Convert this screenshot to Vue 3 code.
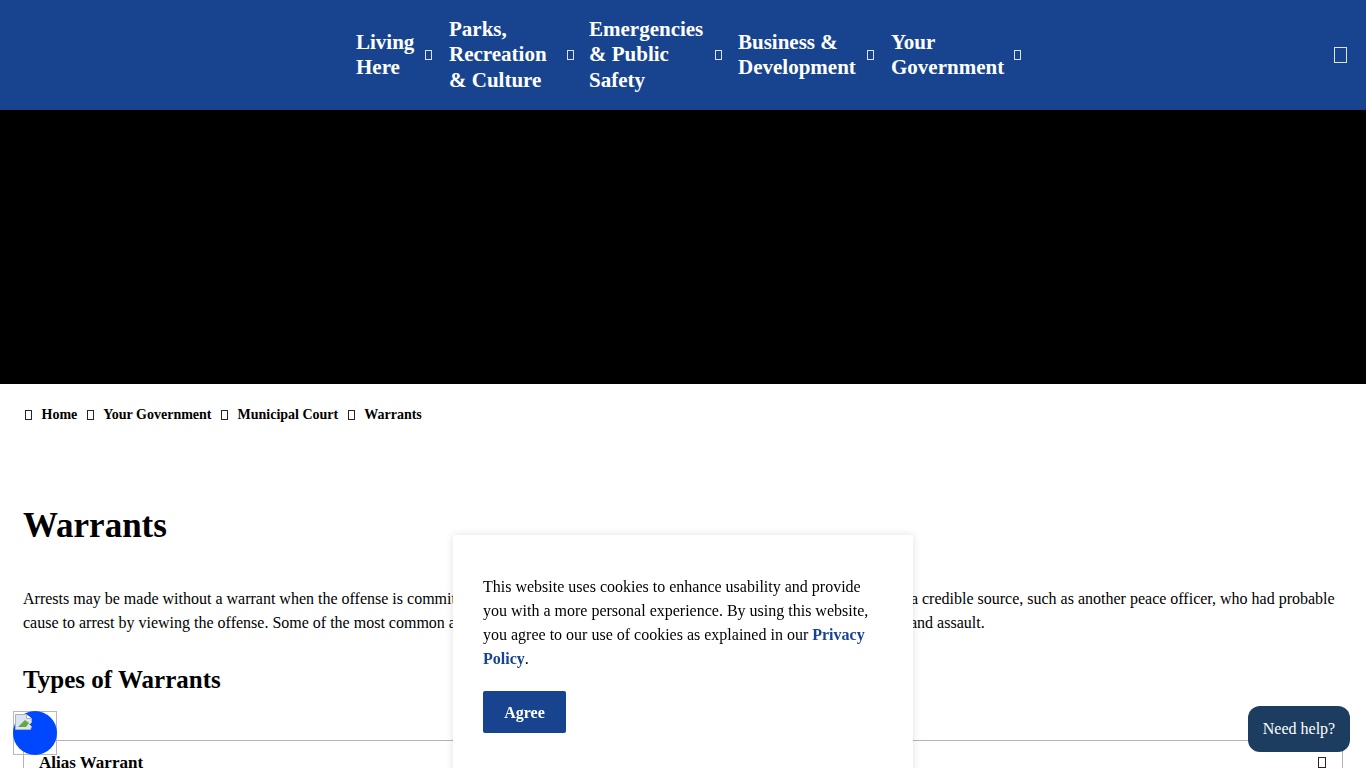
<script setup>
const nav = [
  { label: 'Living Here', w: 'w1' },
  { label: 'Parks, Recreation & Culture', w: 'w2' },
  { label: 'Emergencies & Public Safety', w: 'w3' },
  { label: 'Business & Development', w: 'w4' },
  { label: 'Your Government', w: 'w5' }
]
const crumbs = ['Home', 'Your Government', 'Municipal Court', 'Warrants']
</script>

<template>
  <div class="page">
    <header class="header">
      <nav class="nav">
        <a v-for="n in nav" :key="n.label" class="nav-item" href="#">
          <span class="nav-label" :class="n.w">{{ n.label }}</span>
          <span class="tofu nav-caret"></span>
        </a>
      </nav>
      <span class="tofu search"></span>
    </header>
    <div class="hero"></div>
    <main class="main">
      <div class="crumbs">
        <template v-for="c in crumbs" :key="c">
          <span class="tofu crumb-sep"></span>
          <a href="#" class="crumb">{{ c }}</a>
        </template>
      </div>
      <h1 class="title">Warrants</h1>
      <p class="body">Arrests may be made without a warrant when the offense is committed in an officer's presence, or if that officer receives information from a credible source, such as another peace officer, who had probable cause to arrest by viewing the offense. Some of the most common arrests made without a warrant were for driving while intoxicated, theft and assault.</p>
      <h2 class="subtitle">Types of Warrants</h2>
      <div class="acc">
        <span class="acc-title">Alias Warrant</span>
        <span class="tofu acc-icon"></span>
      </div>
    </main>

    <aside class="cookie">
      <p class="cookie-text">This website uses cookies to enhance usability and provide you with a more personal experience. By using this website, you agree to our use of cookies as explained in our <a href="#" class="cookie-link">Privacy Policy</a>.</p>
      <button class="agree">Agree</button>
    </aside>

    <button class="help">Need help?</button>

    <div class="a11y">
      <div class="a11y-circle"></div>
      <svg class="broken" width="17" height="16" viewBox="0 0 17 16">
        <path d="M.5.5h11l5 4v4l-2 2 2 2-1 3H.5z" fill="#dbe4f1" stroke="#aab1ba" stroke-width="1"/>
        <path d="M3 13l7-7 4 3-3 4z" fill="#62a845"/>
        <path d="M11.500.5v4h5" fill="#fff" stroke="#aab1ba" stroke-width="1"/>
      </svg>
    </div>
  </div>
</template>

<style>
html, body { margin: 0; overflow: hidden; }
</style>

<style scoped>
.page {
  width: 1366px;
  height: 768px;
  overflow: hidden;
  background: #fff;
  color: #000;
  font-family: "Liberation Serif", "Times New Roman", serif;
}
.tofu {
  display: block;
  flex: none;
  box-sizing: border-box;
  border: 1px solid currentColor;
  opacity: .85;
}
.header {
  height: 110px;
  background: #18448f;
  display: flex;
  align-items: center;
  padding: 0 19px 0 356px;
  box-sizing: border-box;
  color: #fff;
}
.nav { display: flex; align-items: center; }
.nav-item {
  display: flex;
  align-items: center;
  margin-right: 17px;
  color: #fff;
  text-decoration: none;
  font-weight: 700;
  font-size: 21px;
  line-height: 25.4px;
}
.nav-item:nth-child(2) { margin-right: 15px; }
.nav-item:nth-child(3) { margin-right: 16px; }
.nav-item:last-child { margin-right: 0; }
.nav-label { display: block; }
.w1 { width: 69px; }
.w2 { width: 118px; }
.w3 { width: 126px; }
.w4 { width: 129px; }
.w5 { width: 123px; }
.nav-caret { width: 7px; height: 10px; }
.search { margin-left: auto; width: 13px; height: 16px; }
.hero { height: 274px; background: #000; }
.main { padding: 0 23px; }
.crumbs {
  display: flex;
  align-items: center;
  gap: 9.5px;
  padding: 23px 0 0 2px;
  height: 16px;
  font-size: 14px;
  font-weight: 700;
}
.crumb-sep { width: 7px; height: 10px; }
.crumb { color: #000; text-decoration: none; }
.title { margin: 82px 0 0; font-size: 35px; line-height: 41px; font-weight: 700; }
.body { margin: 41px 0 0; font-size: 16px; line-height: 24px; }
.subtitle { margin: 31px 0 0; font-size: 25px; line-height: 28px; font-weight: 700; }
.acc {
  margin-top: 46px;
  border: 1px solid #b3b3b3;
  height: 60px;
  display: flex;
  justify-content: space-between;
  padding: 12px 16px 0 15px;
  box-sizing: border-box;
  font-size: 17px;
  line-height: 20px;
  font-weight: 700;
}
.acc-icon { width: 8px; height: 11px; margin-top: 4px; }
.cookie {
  position: fixed;
  left: 453px;
  top: 535px;
  width: 460px;
  height: 260px;
  box-sizing: border-box;
  padding: 40px 30px;
  background: #fff;
  border-radius: 3px;
  box-shadow: 0 0 8px rgba(0, 0, 0, .12);
}
.cookie-text { margin: 0; font-size: 16px; line-height: 24px; }
.cookie-link { color: #18448f; font-weight: 700; text-decoration: none; }
.agree {
  margin-top: 20px;
  display: block;
  width: 83px;
  height: 42px;
  padding: 1px 0 0;
  border: 0;
  border-radius: 2px;
  background: #18448f;
  color: #fff;
  font: 700 16px "Liberation Serif", serif;
}
.help {
  position: fixed;
  left: 1248px;
  top: 706px;
  width: 102px;
  height: 46px;
  border: 0;
  border-radius: 12px;
  background: #1c3d5f;
  color: #fff;
  font: 400 16px "Liberation Serif", serif;
}
.a11y {
  position: fixed;
  left: 13px;
  top: 711px;
  width: 44px;
  height: 44px;
  box-sizing: border-box;
  border: 1px solid #b9b9b9;
}
.a11y-circle {
  position: absolute;
  inset: -1px;
  border-radius: 50%;
  background: #0048ff;
}
.broken { position: absolute; left: 1px; top: 2px; }
</style>
